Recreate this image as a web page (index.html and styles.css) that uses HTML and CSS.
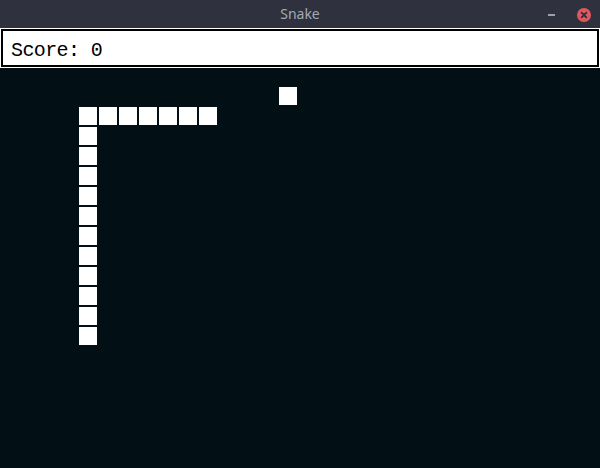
FILE: index.html
```html
<!DOCTYPE html>
<html>
<head>
<meta charset="utf-8">
<title>Snake</title>
<link rel="stylesheet" href="styles.css">
</head>
<body>
<div class="window">
  <header class="titlebar">
    <span class="title">Snake</span>
    <div class="controls">
      <span class="minimize"></span>
      <span class="close">
        <svg width="14" height="14" viewBox="0 0 14 14">
          <circle cx="7" cy="7" r="7" fill="#e0585d"/>
          <path d="M4.6 4.6 L9.4 9.4 M9.4 4.6 L4.6 9.4" stroke="#2f323e" stroke-width="1.8" stroke-linecap="round"/>
        </svg>
      </span>
    </div>
  </header>
  <div class="score">
    <div class="score-inner">Score: 0</div>
  </div>
  <main class="board">
    <div class="cell food" style="grid-column:14;grid-row:1"></div>
    <div class="cell" style="grid-column:4;grid-row:2"></div>
    <div class="cell" style="grid-column:5;grid-row:2"></div>
    <div class="cell" style="grid-column:6;grid-row:2"></div>
    <div class="cell" style="grid-column:7;grid-row:2"></div>
    <div class="cell" style="grid-column:8;grid-row:2"></div>
    <div class="cell" style="grid-column:9;grid-row:2"></div>
    <div class="cell" style="grid-column:10;grid-row:2"></div>
    <div class="cell" style="grid-column:4;grid-row:3"></div>
    <div class="cell" style="grid-column:4;grid-row:4"></div>
    <div class="cell" style="grid-column:4;grid-row:5"></div>
    <div class="cell" style="grid-column:4;grid-row:6"></div>
    <div class="cell" style="grid-column:4;grid-row:7"></div>
    <div class="cell" style="grid-column:4;grid-row:8"></div>
    <div class="cell" style="grid-column:4;grid-row:9"></div>
    <div class="cell" style="grid-column:4;grid-row:10"></div>
    <div class="cell" style="grid-column:4;grid-row:11"></div>
    <div class="cell" style="grid-column:4;grid-row:12"></div>
    <div class="cell" style="grid-column:4;grid-row:13"></div>
  </main>
</div>
</body>
</html>
```

FILE: styles.css
```css
html, body {
  margin: 0;
  padding: 0;
  width: 600px;
  height: 468px;
  overflow: hidden;
  background: #020f15;
}

.window {
  display: flex;
  flex-direction: column;
  width: 600px;
  height: 468px;
}

.titlebar {
  position: relative;
  height: 28px;
  flex: 0 0 28px;
  background: #2f323e;
  display: flex;
  justify-content: center;
  align-items: center;
}

.title {
  font-family: "Noto Sans", sans-serif;
  font-size: 14px;
  line-height: 28px;
  color: #a4a8b3;
}

.controls {
  position: absolute;
  right: 9px;
  top: 8px;
  display: flex;
  align-items: center;
  gap: 22px;
  height: 14px;
}

.minimize {
  display: block;
  width: 7px;
  height: 2px;
  background: #9ba0ab;
}

.close {
  display: block;
  width: 14px;
  height: 14px;
}

.close svg {
  display: block;
}

.score {
  box-sizing: border-box;
  height: 40px;
  flex: 0 0 40px;
  border: 1px solid #ffffff;
  background: #ffffff;
}

.score-inner {
  box-sizing: border-box;
  height: 100%;
  border: 2px solid #000000;
  background: #ffffff;
  padding: 8px 0 0 8px;
  font-family: "Liberation Mono", monospace;
  font-size: 20px;
  letter-spacing: -0.6px;
  line-height: 24px;
  color: #000000;
}

.board {
  flex: 1;
  background: #020f15;
  display: grid;
  grid-template-columns: repeat(29, 18px);
  grid-auto-rows: 18px;
  gap: 2px;
  padding: 19px 0 0 19px;
  align-content: start;
}

.cell {
  background: #ffffff;
  width: 18px;
  height: 18px;
}
```
